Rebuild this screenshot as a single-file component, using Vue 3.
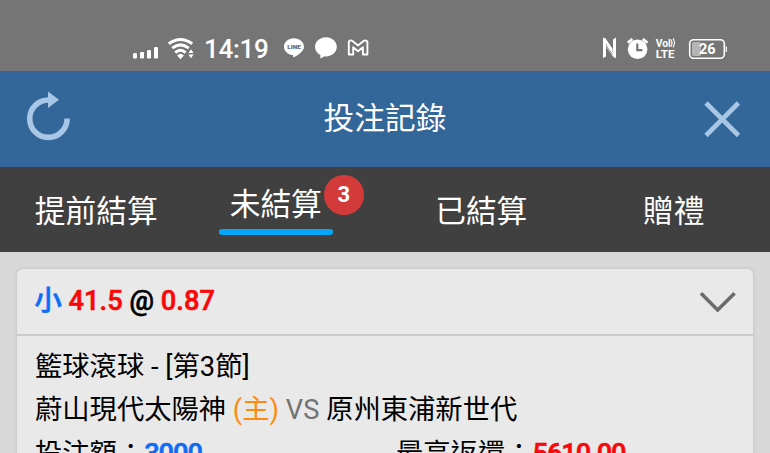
<script setup>
const tabs = [
  { label: '提前結算' },
  { label: '未結算', active: true, badge: 3 },
  { label: '已結算' },
  { label: '贈禮' },
]
</script>

<template>
  <div class="screen">
    <div class="status">
      <svg class="signal" width="26" height="13" viewBox="133 46 26 13" fill="#fff">
        <rect x="133" y="53" width="4" height="5.5" rx="1.2" />
        <rect x="140" y="52" width="4" height="6.5" rx="1.2" />
        <rect x="147" y="50" width="4" height="8.5" rx="1.2" />
        <rect x="154" y="47" width="4" height="11.5" rx="1.2" />
      </svg>
      <svg class="wifi" width="28" height="24" viewBox="167 36 28 24">
        <g fill="none" stroke="#fff" stroke-width="3">
          <path d="M168.8 43.8Q180.5 35.2 192.2 43.8" />
          <path d="M172.2 48.2Q180.5 41.6 188.8 48.2" />
          <path d="M175.2 52.6Q180.5 48 185.6 52.6" />
        </g>
        <path d="M177.1 55.4Q180.5 52.2 183.9 55.4L180.5 59.2Z" fill="#fff" />
        <path d="M188.4 53L191 49.3L193.6 53ZM188.4 54.6L191 58.3L193.6 54.6Z" fill="#fff" />
      </svg>
      <span class="time">14:19</span>
      <svg class="line-app" width="22" height="23" viewBox="283 36 22 23">
        <path d="M293.8 38.3C299.4 38.3 304 42 304 46.7C304 51.5 298 55 293.6 57.3C292.7 57.7 293.3 55.6 293 55.1C288 54.8 284 51.2 284 46.7C284 42 288.3 38.3 293.8 38.3Z" fill="#fff" />
        <text x="294" y="49.3" text-anchor="middle" textLength="13.5" lengthAdjust="spacingAndGlyphs">LINE</text>
      </svg>
      <svg class="bubble" width="24" height="24" viewBox="314 36 24 24">
        <path d="M326 37.2C332 37.2 336.8 41.5 336.8 46.8C336.8 52.3 332 56.4 326 56.4L324.6 56.3L320.3 58.6L320.4 54.9C317 53.3 315 50.3 315 46.8C315 41.5 320 37.2 326 37.2Z" fill="#fff" />
      </svg>
      <svg class="mail" width="22" height="18" viewBox="347 39 22 18" fill="none" stroke="#fff" stroke-width="1.9" stroke-linejoin="round">
        <path d="M348.8 41.8Q350.2 39.4 352.4 41L358 45.4L363.6 41Q366.2 39.6 367.4 41.8V54.5H362.9V47.2L358 51.2L353.2 47.2V54.5H348.8Z" />
      </svg>
      <div class="spacer"></div>
      <svg class="nfc" width="16" height="24" viewBox="602 36 16 24" fill="#fff">
        <path d="M603 37.4L605.6 38.6L612.6 48.8V52.6L606 43.4V56.2L603 58.2Z" />
        <path d="M616 58.2L613.4 57L606.6 47.6V44.2L613 52.2V39.4L616 37.4Z" />
        <path d="M606.8 46.6L612.6 54.4" stroke="#757575" stroke-width="0.8" />
      </svg>
      <svg class="alarm" width="24" height="24" viewBox="626 36 24 24">
        <circle cx="637.6" cy="49.2" r="9.8" fill="#fff" />
        <path d="M627.7 42.8L632.4 38.9M642.8 38.9L647.5 42.8" stroke="#fff" stroke-width="2.6" />
        <path d="M637.3 43.5V50.1H642.4" stroke="#757575" stroke-width="2.2" fill="none" />
      </svg>
      <svg class="volte" width="22" height="24" viewBox="655 36 22 24" fill="#fff">
        <text x="655.8" y="47" textLength="15" lengthAdjust="spacingAndGlyphs">Vol</text>
        <path d="M671 39.6Q673 43.2 671 46.6M673 38.4Q676 43 673 47.4" fill="none" stroke="#fff" stroke-width="1.1" />
        <text x="655.7" y="57.5" textLength="18.8" lengthAdjust="spacingAndGlyphs">LTE</text>
      </svg>
      <svg class="battery" width="40" height="22" viewBox="688 38 40 22">
        <rect x="692" y="42" width="9" height="14" rx="1.5" fill="#b5b5b5" />
        <rect x="689.7" y="39.7" width="34.6" height="18.6" rx="4" fill="none" stroke="#fff" stroke-width="1.6" />
        <path d="M726.3 46.5V52" stroke="#fff" stroke-width="1.2" />
        <text x="707.2" y="54.2" text-anchor="middle">26</text>
      </svg>
    </div>

    <header class="header">
      <svg class="refresh" width="46" height="52" viewBox="26 90 46 52">
        <path d="M67.1 118.5A18.7 18.7 0 1 1 48.4 100" fill="none" stroke="#a8c6e5" stroke-width="5.6" />
        <path d="M48 91.5L59 99.8L48 108Z" fill="#a8c6e5" />
      </svg>
      <h1>投注記錄</h1>
      <svg class="close" width="38" height="38" viewBox="703 100 38 38">
        <path d="M706 103L738.5 135.5M738.5 103L706 135.5" stroke="#a8c6e5" stroke-width="4.6" />
      </svg>
    </header>

    <nav class="tabs">
      <div v-for="tab in tabs" :key="tab.label" class="tab" :class="{ active: tab.active }">
        <span class="label">{{ tab.label }}<span v-if="tab.badge" class="badge">{{ tab.badge }}</span></span>
      </div>
    </nav>

    <main class="content">
      <section class="card">
        <div class="card-head">
          <div class="pick"><span class="blue">小</span> <span class="red">41.5</span> @ <span class="red">0.87</span></div>
          <svg width="38" height="24" viewBox="699 289 38 24">
            <path d="M701 292.3L717.6 309L734.6 292.3" fill="none" stroke="#6c6c6c" stroke-width="3.6" />
          </svg>
        </div>
        <div class="card-body">
          <div class="row">籃球滾球 - [第3節]</div>
          <div class="row">蔚山現代太陽神 <span class="orange">(主)</span> <span class="grey">VS</span> 原州東浦新世代</div>
          <div class="row amounts">
            <div>投注額：<b class="blue">3000</b></div>
            <div>最高返還：<b class="red">5610.00</b></div>
          </div>
        </div>
      </section>
    </main>
  </div>
</template>

<style>
body { margin: 0; overflow: hidden; }
</style>

<style scoped>
.screen {
  width: 770px;
  height: 453px;
  overflow: hidden;
  display: flex;
  flex-direction: column;
  background: #d8d8d8;
  font-family: Roboto, "Noto Sans CJK TC", sans-serif;
  color: #000;
}
svg { display: block; flex: none; }
.status {
  box-sizing: border-box;
  height: 71px;
  flex: none;
  padding: 36px 42px 0 133px;
  display: flex;
  align-items: flex-start;
  background: #757575;
  color: #fff;
}
.signal { margin-top: 10px; }
.wifi { margin-left: 8px; }
.time {
  width: 66px;
  margin-left: 9px;
  font-size: 26px;
  line-height: 26px;
  font-weight: 500;
  letter-spacing: -0.3px;
}
.line-app { margin-left: 13px; }
.line-app text { font-size: 6px; font-weight: 900; fill: #666; }
.bubble { margin-left: 9px; }
.mail { margin: 3px 0 0 9px; }
.spacer { flex: 1; }
.alarm { margin-left: 8px; }
.volte { margin-left: 5px; }
.volte text { font-size: 11.2px; font-weight: 700; }
.battery { margin: 2px 0 0 11px; }
.battery text { font-size: 14.5px; font-weight: 700; fill: #fff; }

.header {
  height: 96px;
  flex: none;
  box-sizing: border-box;
  padding: 0 29px 0 26px;
  display: grid;
  grid-template-columns: 46px 1fr 38px;
  align-items: center;
  background: #336699;
}
.refresh { margin-bottom: 6px; }
h1 {
  margin: 0 5px 0 0;
  text-align: center;
  color: #fff;
  font-size: 30.7px;
  line-height: 40px;
  font-weight: 400;
}

.tabs {
  height: 85px;
  flex: none;
  display: grid;
  grid-template-columns: repeat(4, 1fr);
  background: #404040;
  color: #fff;
  font-size: 30.7px;
  line-height: 40px;
}
.tab { display: flex; justify-content: center; padding-top: 25px; }
.label { position: relative; height: 40px; }
.tab.active { padding: 18px 26px 0 0; }
.tab.active .label {
  height: 46px;
  padding: 0 11px;
}
.tab.active .label::after {
  content: "";
  position: absolute;
  left: 0;
  right: 0;
  bottom: -4px;
  height: 6px;
  border-radius: 3px;
  background: #06a7fb;
}
.badge {
  position: absolute;
  top: -10px;
  right: -31px;
  width: 40px;
  height: 40px;
  border-radius: 50%;
  background: #d33a3a;
  text-align: center;
  font-size: 22px;
  font-weight: 700;
}

.content { padding: 17px 17px 0; }
.card {
  height: 240px;
  border-radius: 6px 6px 0 0;
  background: #e9e9e9;
  box-shadow: 0 0 4px rgba(0, 0, 0, 0.12);
}
.card-head {
  height: 65px;
  padding: 0 16px 0 17.5px;
  display: flex;
  align-items: center;
  justify-content: space-between;
  border-bottom: 2px solid #cacaca;
}
.pick {
  font-size: 27.3px;
  line-height: 40px;
  font-weight: 500;
  margin-bottom: 2px;
  -webkit-text-stroke: 0.6px currentColor;
}
.card-body { padding: 10px 18px 0; }
.row {
  height: 43.2px;
  font-size: 27.3px;
  line-height: 43.2px;
  white-space: pre;
}
.amounts { display: grid; grid-template-columns: 361px 1fr; line-height: 44.5px; }
b {
  font-weight: 500;
  letter-spacing: -1.1px;
  -webkit-text-stroke: 0.6px currentColor;
}
.blue { color: #0f6cf5; }
.red { color: #f80808; }
.orange { color: #ff8a0d; }
.grey { color: #737373; }
</style>
